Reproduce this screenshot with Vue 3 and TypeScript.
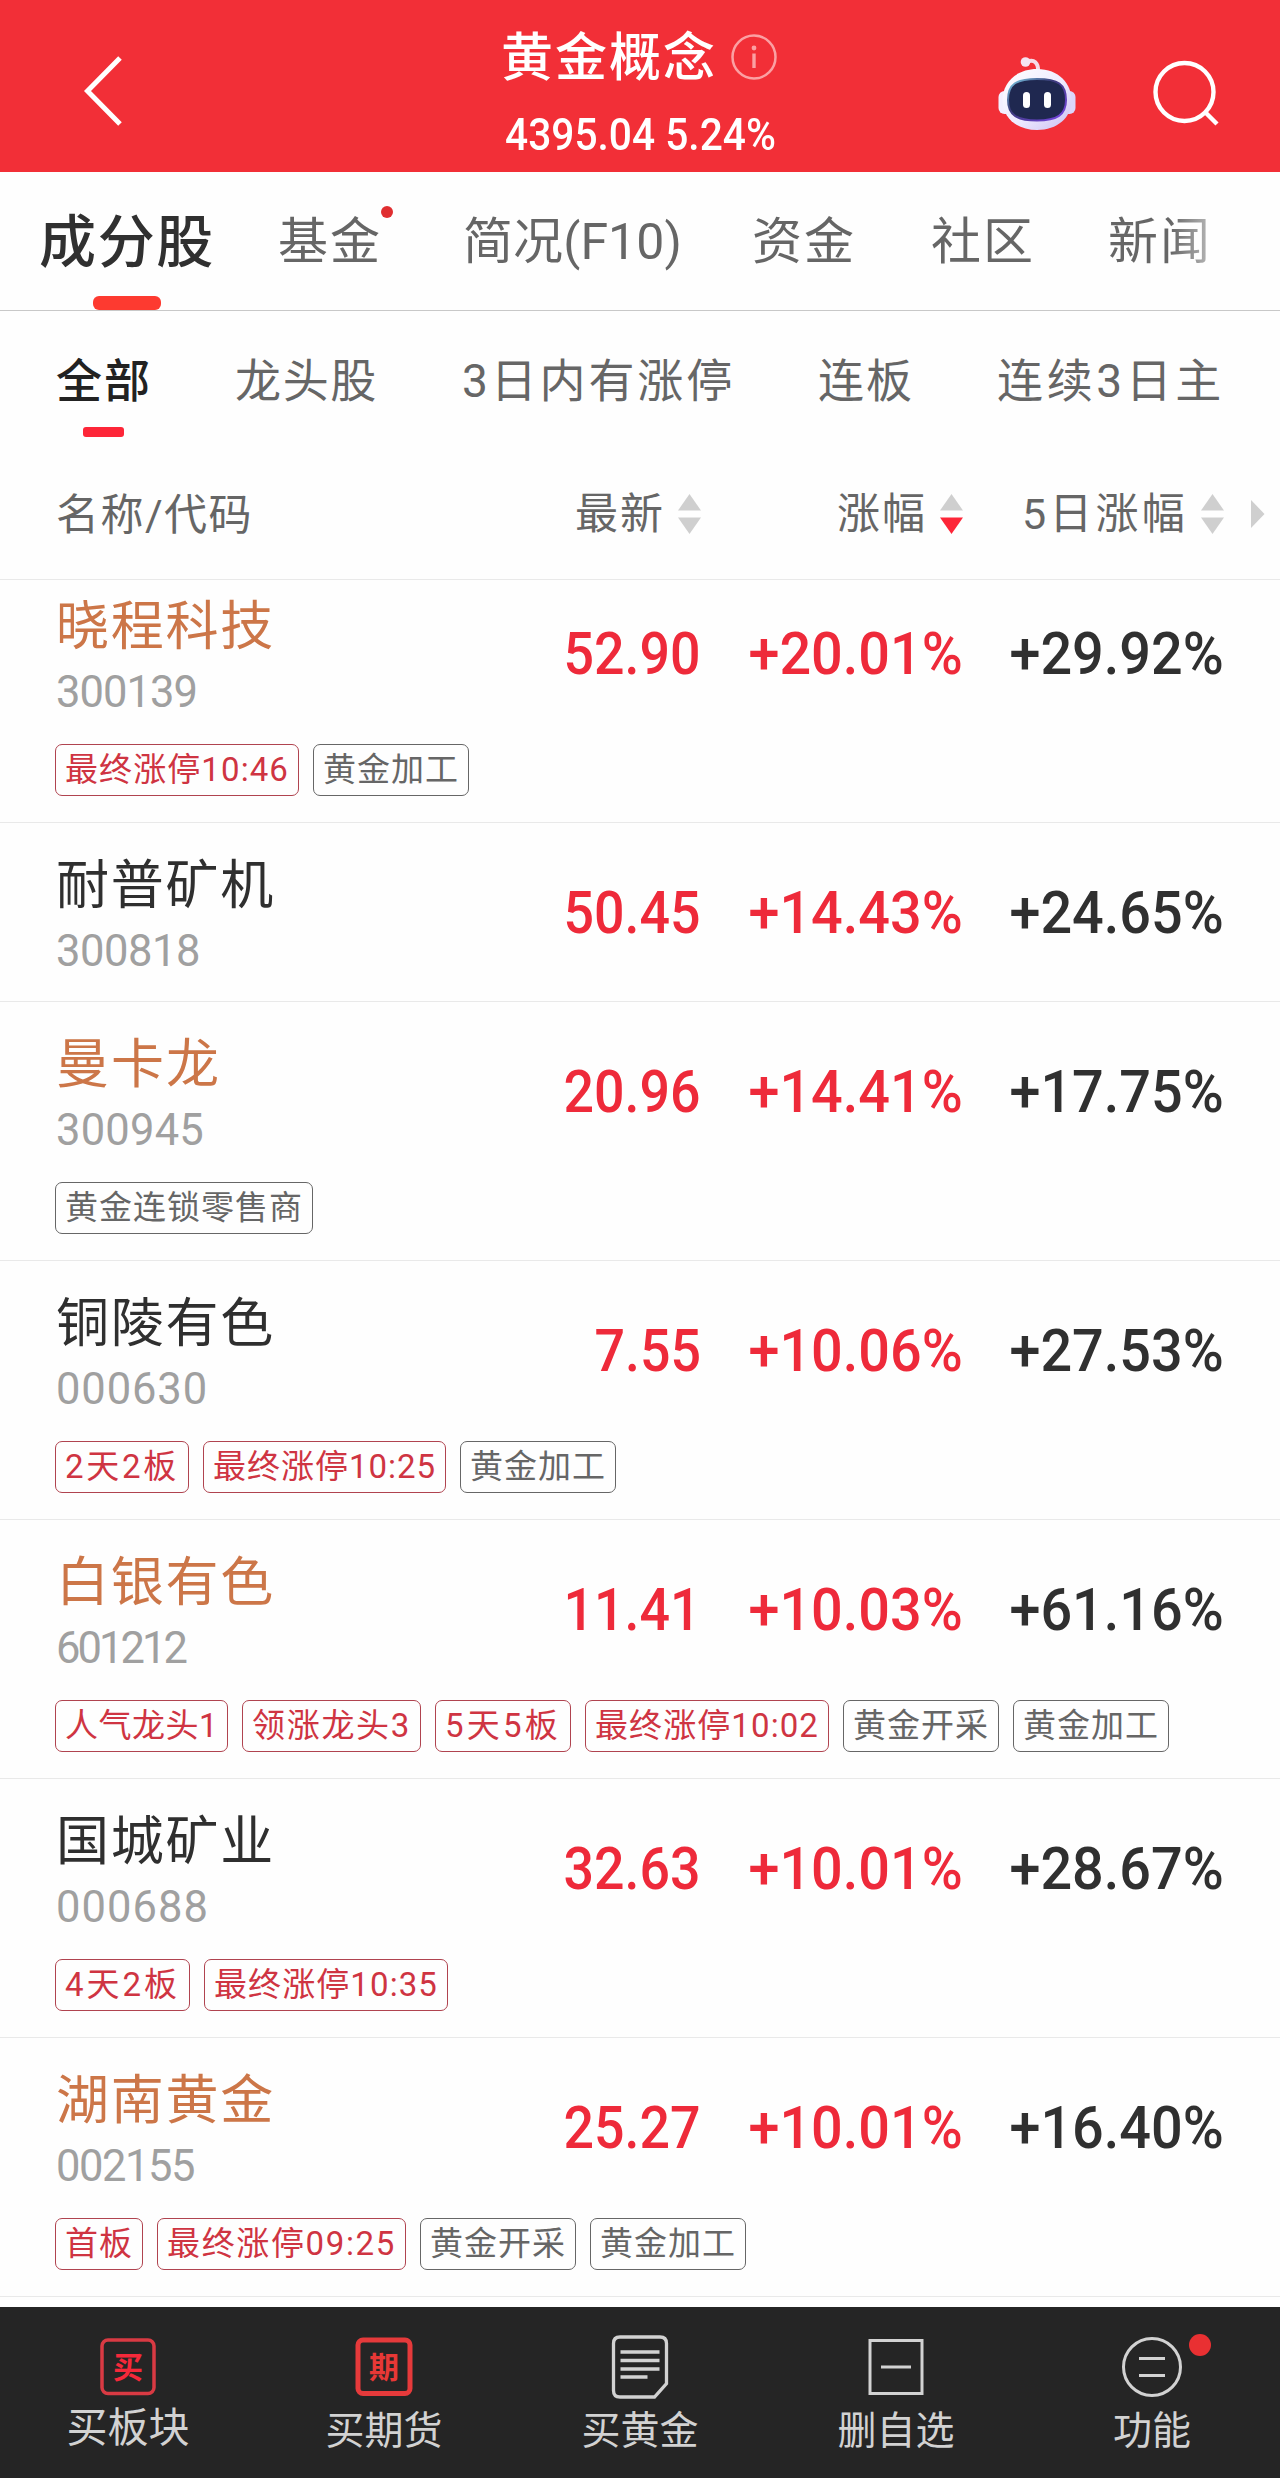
<script setup lang="ts">
import type { Directive } from 'vue'

interface Label { text: string; width: number }
interface Tag extends Label { hot?: boolean }
interface Stock {
  name: Label
  code: Label
  price: string
  change: string
  fiveDay: string
  gold?: boolean
  tags: Tag[]
}

// Spreads the characters of a label over a given width.
const vFit: Directive<HTMLElement, number> = {
  mounted(el, { value }) {
    const count = (el.textContent ?? '').trim().length
    const natural = el.getBoundingClientRect().width
    el.style.letterSpacing = `${(value - natural) / count}px`
  },
}

const tabs = [
  { text: '成分股', width: 176, gap: 39 },
  { text: '基金', width: 104, gap: 63 },
  { text: '简况(F10)', width: 219, gap: 81 },
  { text: '资金', width: 104, gap: 70 },
  { text: '社区', width: 104, gap: 75 },
  { text: '新闻', width: 104, gap: 73 },
]

const filters = [
  { text: '全部', width: 96, gap: 56 },
  { text: '龙头股', width: 143, gap: 83 },
  { text: '3日内有涨停', width: 273, gap: 84 },
  { text: '连板', width: 96, gap: 83 },
  { text: '连续3日主', width: 228, gap: 83 },
]

const columns = [
  { text: '最新', width: 90, sorted: false },
  { text: '涨幅', width: 90, sorted: true },
  { text: '5日涨幅', width: 166, sorted: false },
]

const hot = (text: string, width: number): Tag => ({ text, width, hot: true })
const concept = (text: string, width = 156): Tag => ({ text, width })

const stocks: Stock[] = [
  { name: { text: '晓程科技', width: 219 }, code: { text: '300139', width: 141 }, price: '52.90', change: '+20.01%', fiveDay: '+29.92%', gold: true, tags: [hot('最终涨停10:46', 244), concept('黄金加工')] },
  { name: { text: '耐普矿机', width: 219 }, code: { text: '300818', width: 144 }, price: '50.45', change: '+14.43%', fiveDay: '+24.65%', tags: [] },
  { name: { text: '曼卡龙', width: 165 }, code: { text: '300945', width: 148 }, price: '20.96', change: '+14.41%', fiveDay: '+17.75%', gold: true, tags: [concept('黄金连锁零售商', 258)] },
  { name: { text: '铜陵有色', width: 219 }, code: { text: '000630', width: 152 }, price: '7.55', change: '+10.06%', fiveDay: '+27.53%', tags: [hot('2天2板', 134), hot('最终涨停10:25', 243), concept('黄金加工')] },
  { name: { text: '白银有色', width: 219 }, code: { text: '601212', width: 129 }, price: '11.41', change: '+10.03%', fiveDay: '+61.16%', gold: true, tags: [hot('人气龙头1', 173), hot('领涨龙头3', 179), hot('5天5板', 136), hot('最终涨停10:02', 244), concept('黄金开采'), concept('黄金加工')] },
  { name: { text: '国城矿业', width: 219 }, code: { text: '000688', width: 153 }, price: '32.63', change: '+10.01%', fiveDay: '+28.67%', tags: [hot('4天2板', 135), hot('最终涨停10:35', 244)] },
  { name: { text: '湖南黄金', width: 219 }, code: { text: '002155', width: 138 }, price: '25.27', change: '+10.01%', fiveDay: '+16.40%', gold: true, tags: [hot('首板', 88), hot('最终涨停09:25', 249), concept('黄金开采'), concept('黄金加工')] },
]
</script>

<template>
  <div class="app">
    <header class="top">
      <div class="side">
        <svg class="back" width="46" height="76" viewBox="0 0 46 76" fill="none">
          <path d="M41 5L8.500 38L41 71" stroke="#fff" stroke-width="5" />
        </svg>
      </div>
      <div class="heading">
        <div class="title">
          <h1><span v-fit="216">黄金概念</span></h1>
          <svg width="46" height="46" viewBox="0 0 46 46" fill="none">
            <circle cx="23" cy="23" r="21.500" stroke="#fba0a3" stroke-width="2.500" />
            <circle cx="23" cy="14" r="2.400" fill="#fba0a3" />
            <path d="M23 19.500V34" stroke="#fba0a3" stroke-width="3.400" />
          </svg>
        </div>
        <div class="index"><span>4395.04 5.24%</span></div>
      </div>
      <div class="side actions">
        <svg width="80" height="76" viewBox="0 0 80 76" fill="none">
          <defs>
            <linearGradient id="shell" x1="0" y1="0" x2="1" y2="1">
              <stop offset="0" stop-color="#fff" />
              <stop offset=".55" stop-color="#eeeaff" />
              <stop offset="1" stop-color="#c9bff2" />
            </linearGradient>
            <linearGradient id="rim" x1="0" y1="0" x2="1" y2="1">
              <stop offset="0" stop-color="#7fd0e8" />
              <stop offset=".4" stop-color="#3b3a7a" />
              <stop offset="1" stop-color="#7a45e8" />
            </linearGradient>
          </defs>
          <path d="M30 7C37 3.500 41.500 8 41 16" stroke="#f6dbe8" stroke-width="4" />
          <circle cx="28.500" cy="7" r="4.800" fill="#f5e4f2" />
          <rect x="1.500" y="36" width="14" height="23" rx="6" fill="#f3efff" />
          <rect x="64.500" y="36" width="14" height="23" rx="6" fill="#dcd5fb" />
          <path d="M40 14C62 14 74.500 29 74.500 45C74.500 63 60 75 40 75S5.500 63 5.500 45C5.500 29 18 14 40 14Z" fill="url(#shell)" />
          <path d="M40 24C61 24 69 29 69 45C69 60 60 65.500 40 65.500S11 60 11 45C11 29 19 24 40 24Z" fill="#1f2850" stroke="url(#rim)" stroke-width="2" />
          <rect x="26" y="37" width="7" height="16" rx="3.500" fill="#fff" />
          <rect x="47" y="37" width="7" height="16" rx="3.500" fill="#fff" />
        </svg>
        <svg width="70" height="70" viewBox="0 0 70 70" fill="none" stroke="#fff" stroke-width="4.400">
          <circle cx="33.500" cy="34" r="29" />
          <path d="M54 54L66 66" />
        </svg>
      </div>
    </header>

    <nav class="tabs">
      <a v-for="(tab, i) in tabs" :key="tab.text" class="tab" :class="{ active: i === 0, fading: i === 5 }" :style="{ width: tab.width + 'px', marginLeft: tab.gap + 'px' }">
        <span v-fit="tab.width">{{ tab.text }}</span>
        <i v-if="i === 1" class="dot" />
      </a>
    </nav>

    <nav class="filters">
      <a v-for="(f, i) in filters" :key="f.text" class="filter" :class="{ active: i === 0 }" :style="{ width: f.width + 'px', marginLeft: f.gap + 'px' }">
        <span v-fit="f.width">{{ f.text }}</span>
      </a>
    </nav>

    <div class="grid thead">
      <div class="first"><span v-fit="197">名称/代码</span></div>
      <div v-for="c in columns" :key="c.text" class="col">
        <span v-fit="c.width">{{ c.text }}</span>
        <svg width="23" height="42" viewBox="0 0 23 42">
          <path d="M11.500 1L23 17.500H0Z" fill="#cfcfcf" />
          <path d="M0 24.500H23L11.500 41Z" :fill="c.sorted ? '#fd2638' : '#cfcfcf'" />
        </svg>
      </div>
      <svg class="more" width="14" height="28" viewBox="0 0 14 28"><path d="M0 0L13.500 14L0 28Z" fill="#cfcfcf" /></svg>
    </div>

    <main class="list">
      <section v-for="s in stocks" :key="s.code.text" class="row">
        <div class="grid">
          <div class="first">
            <div class="name" :class="{ gold: s.gold }"><span v-fit="s.name.width">{{ s.name.text }}</span></div>
            <div class="code"><span v-fit="s.code.width">{{ s.code.text }}</span></div>
          </div>
          <div class="num price"><span>{{ s.price }}</span></div>
          <div class="num"><span>{{ s.change }}</span></div>
          <div class="num dark"><span>{{ s.fiveDay }}</span></div>
        </div>
        <div v-if="s.tags.length" class="tags">
          <div v-for="t in s.tags" :key="t.text" class="tag" :class="{ hot: t.hot }" :style="{ width: t.width + 'px' }">
            <span v-fit="t.width - 20">{{ t.text }}</span>
          </div>
        </div>
      </section>
    </main>

    <footer class="bar">
      <div class="item">
        <svg width="64" height="68" viewBox="0 0 64 68" fill="none">
          <rect x="6" y="8" width="52" height="53.500" rx="6" stroke="#d93a43" stroke-width="3.500" />
          <text x="32" y="46" text-anchor="middle" class="glyph" fill="#f5293a">买</text>
        </svg>
        <span v-fit="123" class="large">买板块</span>
      </div>
      <div class="item">
        <svg width="64" height="68" viewBox="0 0 64 68" fill="none">
          <rect x="6" y="8" width="52" height="53.500" rx="5" stroke="#e63a3b" stroke-width="5" />
          <text x="32" y="46" text-anchor="middle" class="glyph" fill="#e83836">期</text>
        </svg>
        <span v-fit="117">买期货</span>
      </div>
      <div class="item">
        <svg width="64" height="68" viewBox="0 0 64 68" fill="none" stroke="#d2d2d2" stroke-width="3.300">
          <path d="M12 5H52Q58.500 5 58.500 11.500V51.500L46.500 65H12Q5.500 65 5.500 58.500V11.500Q5.500 5 12 5Z" />
          <path d="M12.500 20H51.500M12.500 28.500H51.500M12.500 37H51.500M12.500 45H39.500" />
        </svg>
        <span v-fit="117">买黄金</span>
      </div>
      <div class="item">
        <svg width="64" height="68" viewBox="0 0 64 68" fill="none" stroke="#d2d2d2" stroke-width="3">
          <path d="M6 8.500H58V61.500H6ZM17 35H47" />
        </svg>
        <span v-fit="117">删自选</span>
      </div>
      <div class="item">
        <svg width="64" height="68" viewBox="0 0 64 68" fill="none" stroke="#d2d2d2" stroke-width="3">
          <circle cx="32" cy="35" r="28.500" />
          <path d="M19 26.500H45M19 43.500H45" />
        </svg>
        <i class="badge" />
        <span v-fit="78">功能</span>
      </div>
    </footer>
  </div>
</template>

<style>
body { background: #fefefe; }
</style>

<style scoped>
.app {
  width: 1280px;
  height: 2478px;
  display: flex;
  flex-direction: column;
  overflow: hidden;
  background: #fefefe;
  color: #666;
  font-family: Roboto, "Noto Sans CJK SC", sans-serif;
}
.app * { box-sizing: border-box; }
svg { display: block; flex: none; }
span { display: inline-block; white-space: nowrap; }

.top { display: flex; flex: none; height: 172px; background: #f22f37; color: #fff; }
.side { width: 440px; display: flex; align-items: center; }
.back { margin: 9px 0 0 79px; }
.heading { width: 400px; }
.title { display: flex; align-items: center; height: 64px; margin: 25px 0 0 61px; }
.title h1 { margin: 0; padding-top: 4px; font-size: 52px; line-height: 60px; font-weight: 500; white-space: nowrap; }
.title svg { margin-left: 14px; }
.index { margin: 20px 0 0 65px; height: 52px; line-height: 52px; font-size: 44px; font-weight: 500; }
.index span { transform: scaleX(.925); transform-origin: left; }
.actions { padding: 14px 0 0 157px; }
.actions svg + svg { margin-left: 74px; }

.tabs { display: flex; flex: none; height: 139px; border-bottom: 1px solid #c8c8c8; }
.tab { position: relative; flex: none; height: 138px; font-size: 50px; line-height: 141px; }
.tab.active { font-size: 57px; font-weight: 500; color: #303030; }
.tab.active::after { content: ""; position: absolute; left: 54px; bottom: 0; width: 68px; height: 14px; border-radius: 6px; background: #fd3a30; }
.tab.fading { color: transparent; background: linear-gradient(90deg, #666 60%, #bbb 100%); background-clip: text; -webkit-background-clip: text; }
.dot { position: absolute; left: 103px; top: 34px; width: 12px; height: 12px; border-radius: 50%; background: #e02e30; }

.filters { display: flex; flex: none; height: 138px; }
.filter { position: relative; flex: none; font-size: 46px; line-height: 140px; }
.filter.active { font-weight: 500; color: #222; }
.filter.active::after { content: ""; position: absolute; left: 27px; top: 116px; width: 41px; height: 10px; border-radius: 3px; background: #fd2638; }

.grid { display: grid; grid-template-columns: 400px 245px 262px 261px 1fr; padding-left: 56px; }
.thead { flex: none; height: 131px; border-bottom: 1px solid #e9e9e9; font-size: 43px; line-height: 132px; }
.first { height: 130px; }
.col { display: flex; height: 130px; justify-content: flex-end; align-items: center; }
.col svg { margin-left: 13px; }
.more { align-self: center; margin-left: 27px; }

.list { flex: none; height: 1727px; overflow: hidden; display: flex; flex-direction: column; }
.row { flex: none; border-bottom: 1px solid #e9e9e9; padding-top: 28px; height: 179px; }
.row:has(.tags) { height: 259px; }
.row:first-child { margin-top: -16px; }
.name { padding-top: 2px; font-size: 53px; line-height: 66px; color: #2f2f2f; }
.name.gold { color: #cc7648; }
.code { margin-top: 8px; font-size: 43.500px; line-height: 50px; color: #a0a0a0; }
.num { height: 124px; text-align: right; font-size: 59px; line-height: 124px; font-weight: 500; color: #ee2a3a; }
.num span { transform: scaleX(.945); transform-origin: right; }
.num.price span { transform: scaleX(.91); }
.num.dark { color: #303030; }
.tags { display: flex; gap: 14px; margin: 22px 0 0 55px; }
.tag { flex: none; height: 52px; padding-left: 9px; border: 1.500px solid #666; border-radius: 7px; font-size: 33px; line-height: 50px; }
.tag.hot { border-color: #b0434f; color: #cf3442; }

.bar { flex: none; height: 171px; display: flex; background: #252525; color: #d2d2d2; }
.item { position: relative; width: 256px; display: flex; flex-direction: column; align-items: center; padding-top: 25px; font-size: 39px; line-height: 50px; }
.item svg { margin-bottom: 6px; }
.item span { margin-top: 0; }
.item span.large { font-size: 41px; margin-top: -3px; }
.glyph { font: 700 30px "Noto Sans CJK SC", sans-serif; }
.badge { position: absolute; left: 165px; top: 27px; width: 22px; height: 22px; border-radius: 50%; background: #e93032; }
</style>
